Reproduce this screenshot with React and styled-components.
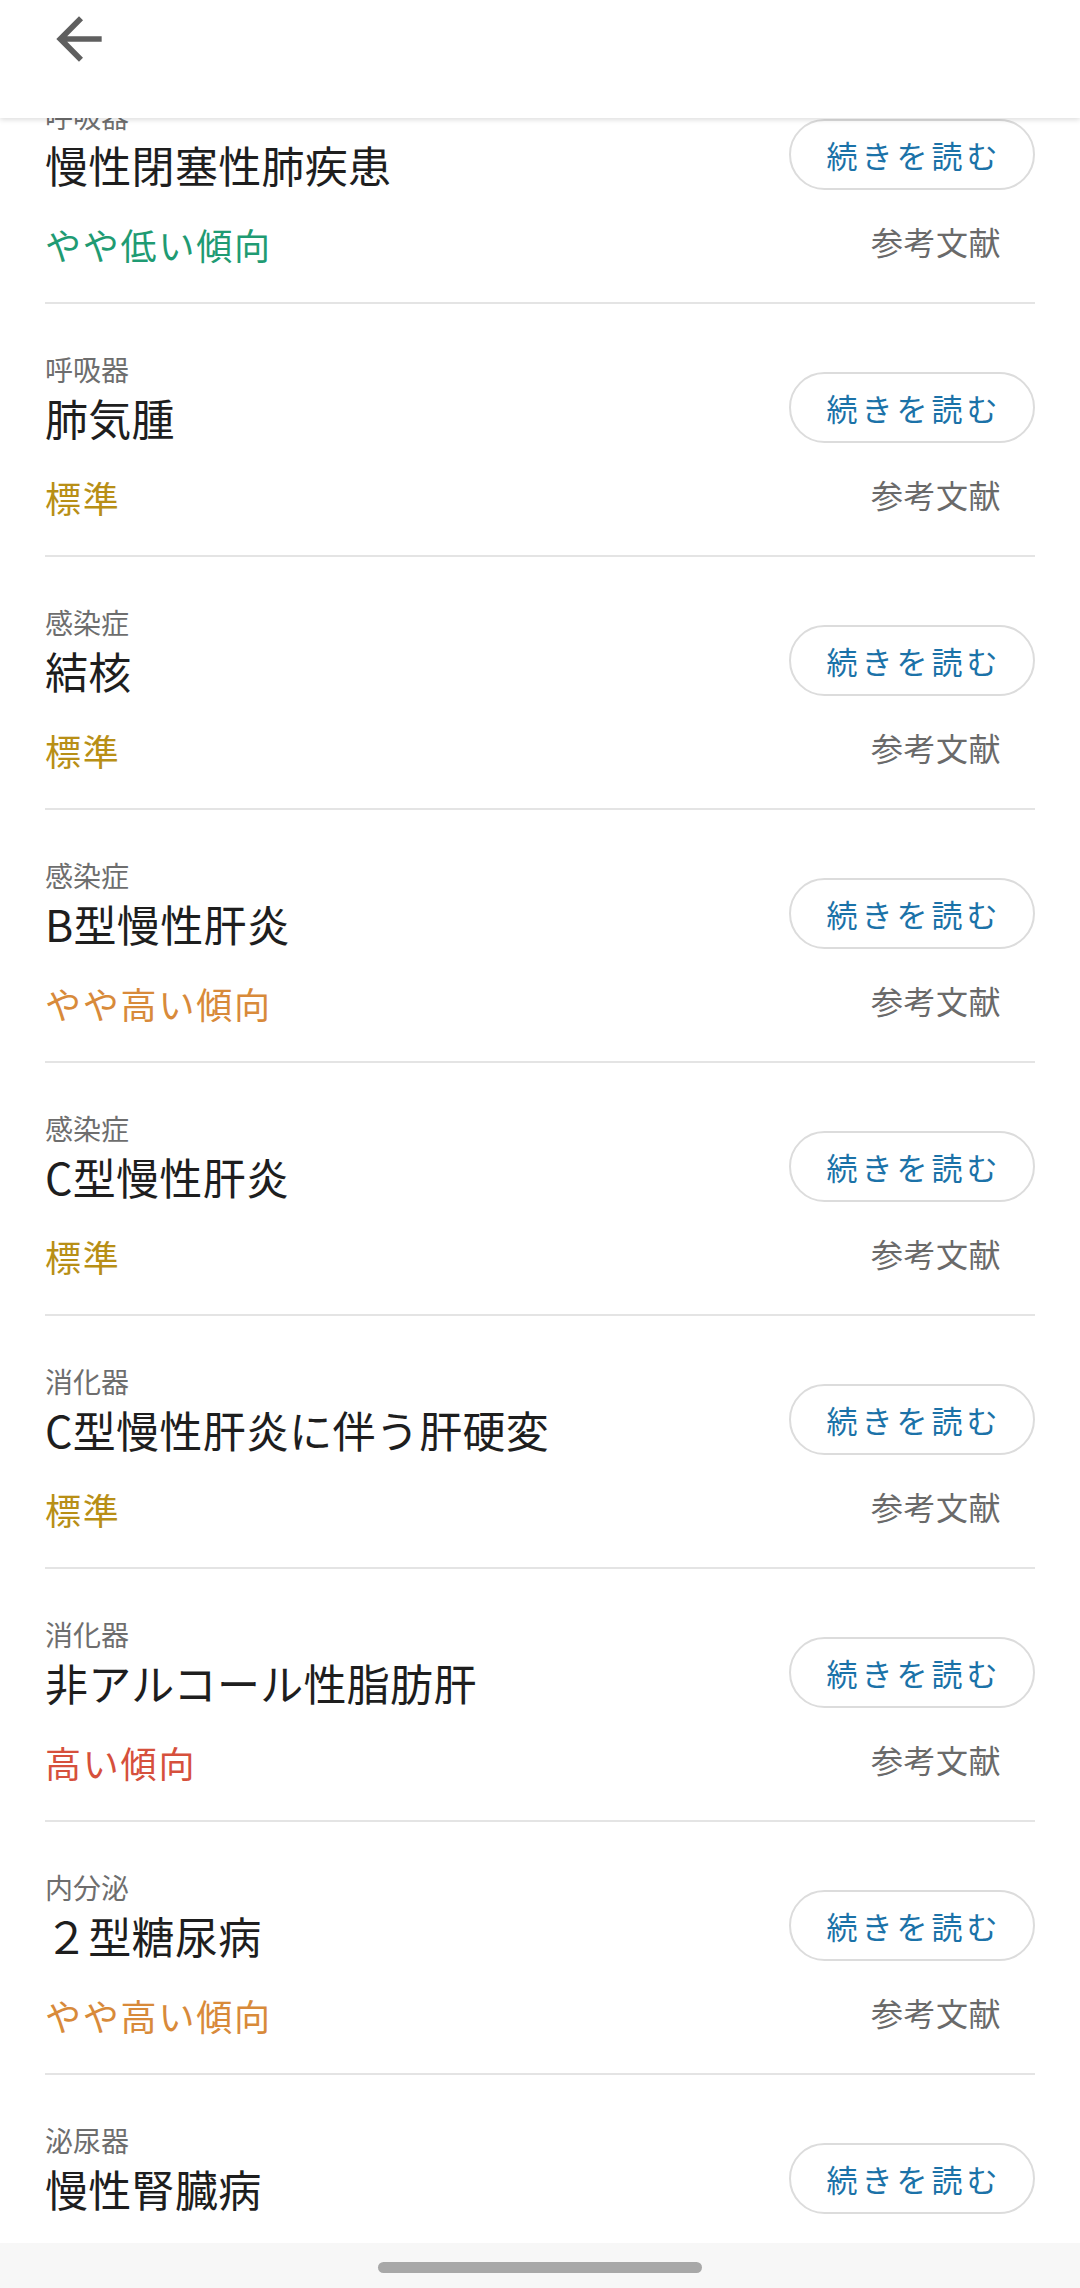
import styled, { createGlobalStyle } from 'styled-components';

const GlobalStyle = createGlobalStyle`
  html, body {
    margin: 0;
    padding: 0;
    background: #fff;
    overflow: hidden;
  }
  body {
    font-family: "Noto Sans CJK JP", "Noto Sans", sans-serif;
    -webkit-font-smoothing: antialiased;
  }
`;

const Screen = styled.div`
  position: relative;
  width: 1080px;
  height: 2288px;
  overflow: hidden;
  background: #fff;
`;

const Header = styled.header`
  position: absolute;
  top: 0;
  left: 0;
  right: 0;
  height: 118px;
  background: #fff;
  box-shadow: 0 2px 5px rgba(0, 0, 0, 0.13);
  z-index: 10;
  display: flex;
  align-items: flex-start;
  padding: 5px 0 0 45px;
  box-sizing: border-box;
`;

const BackButton = styled.button`
  width: 68px;
  height: 68px;
  padding: 0;
  border: none;
  background: none;
  display: flex;
  align-items: center;
  justify-content: center;
  cursor: pointer;
`;

const List = styled.div`
  padding: 51px 45px 0;
`;

const Item = styled.div`
  padding: 48px 0 36px;
  border-bottom: 2px solid #e4e4e4;
`;

const TopRow = styled.div`
  display: flex;
  justify-content: space-between;
  align-items: flex-start;
`;

const Names = styled.div`
  display: flex;
  flex-direction: column;
`;

const Category = styled.div`
  font-size: 28px;
  line-height: 34px;
  color: #6e6e6e;
`;

const Title = styled.div`
  margin-top: 5px;
  font-size: 43px;
  line-height: 52px;
  letter-spacing: 0.3px;
  color: #1e1e1e;
`;

const ReadButton = styled.button`
  margin-top: 20px;
  width: 246px;
  height: 71px;
  box-sizing: border-box;
  border: 2px solid #dcdcdc;
  border-radius: 36px;
  background: #fff;
  font-family: inherit;
  font-size: 31px;
  letter-spacing: 4px;
  color: #1b72a8;
  display: flex;
  align-items: center;
  justify-content: center;
  padding: 0 0 0 4px;
`;

const BottomRow = styled.div`
  margin-top: 32px;
  display: flex;
  justify-content: space-between;
  align-items: flex-start;
`;

const tones = {
  low: '#1f9b73',
  normal: '#b88f16',
  high: '#d88a3a',
  veryHigh: '#d6503c',
};

const Status = styled.div`
  font-size: 36px;
  line-height: 44px;
  letter-spacing: 1.8px;
  color: ${(p) => tones[p.$tone]};
`;

const RefLink = styled.div`
  margin-right: 34px;
  font-size: 32px;
  line-height: 38px;
  letter-spacing: 0.5px;
  color: #6a6a6a;
`;

const NavBar = styled.div`
  position: absolute;
  left: 0;
  right: 0;
  bottom: 0;
  height: 45px;
  background: #f7f7f7;
  display: flex;
  justify-content: center;
  padding-top: 19px;
  box-sizing: border-box;
  z-index: 10;
`;

const Pill = styled.div`
  width: 324px;
  height: 11px;
  border-radius: 6px;
  background: #a8a8a8;
`;

const diseases = [
  { category: '呼吸器', name: '慢性閉塞性肺疾患', status: 'やや低い傾向', tone: 'low' },
  { category: '呼吸器', name: '肺気腫', status: '標準', tone: 'normal' },
  { category: '感染症', name: '結核', status: '標準', tone: 'normal' },
  { category: '感染症', name: 'B型慢性肝炎', status: 'やや高い傾向', tone: 'high' },
  { category: '感染症', name: 'C型慢性肝炎', status: '標準', tone: 'normal' },
  { category: '消化器', name: 'C型慢性肝炎に伴う肝硬変', status: '標準', tone: 'normal' },
  { category: '消化器', name: '非アルコール性脂肪肝', status: '高い傾向', tone: 'veryHigh' },
  { category: '内分泌', name: '２型糖尿病', status: 'やや高い傾向', tone: 'high' },
  { category: '泌尿器', name: '慢性腎臓病', status: '標準', tone: 'normal' },
];

const BackIcon = () => (
  <svg width="68" height="68" viewBox="0 0 24 24">
    <path fill="#5f5f5f" d="M20 11H7.83l5.59-5.59L12 4l-8 8 8 8 1.41-1.41L7.83 13H20v-2z" />
  </svg>
);

export default function App() {
  return (
    <>
      <GlobalStyle />
      <Screen>
        <Header>
          <BackButton aria-label="戻る"><BackIcon /></BackButton>
        </Header>
        <List>
          {diseases.map((d, i) => (
            <Item key={i}>
              <TopRow>
                <Names>
                  <Category>{d.category}</Category>
                  <Title>{d.name}</Title>
                </Names>
                <ReadButton>続きを読む</ReadButton>
              </TopRow>
              <BottomRow>
                <Status $tone={d.tone}>{d.status}</Status>
                <RefLink>参考文献</RefLink>
              </BottomRow>
            </Item>
          ))}
        </List>
        <NavBar><Pill /></NavBar>
      </Screen>
    </>
  );
}
